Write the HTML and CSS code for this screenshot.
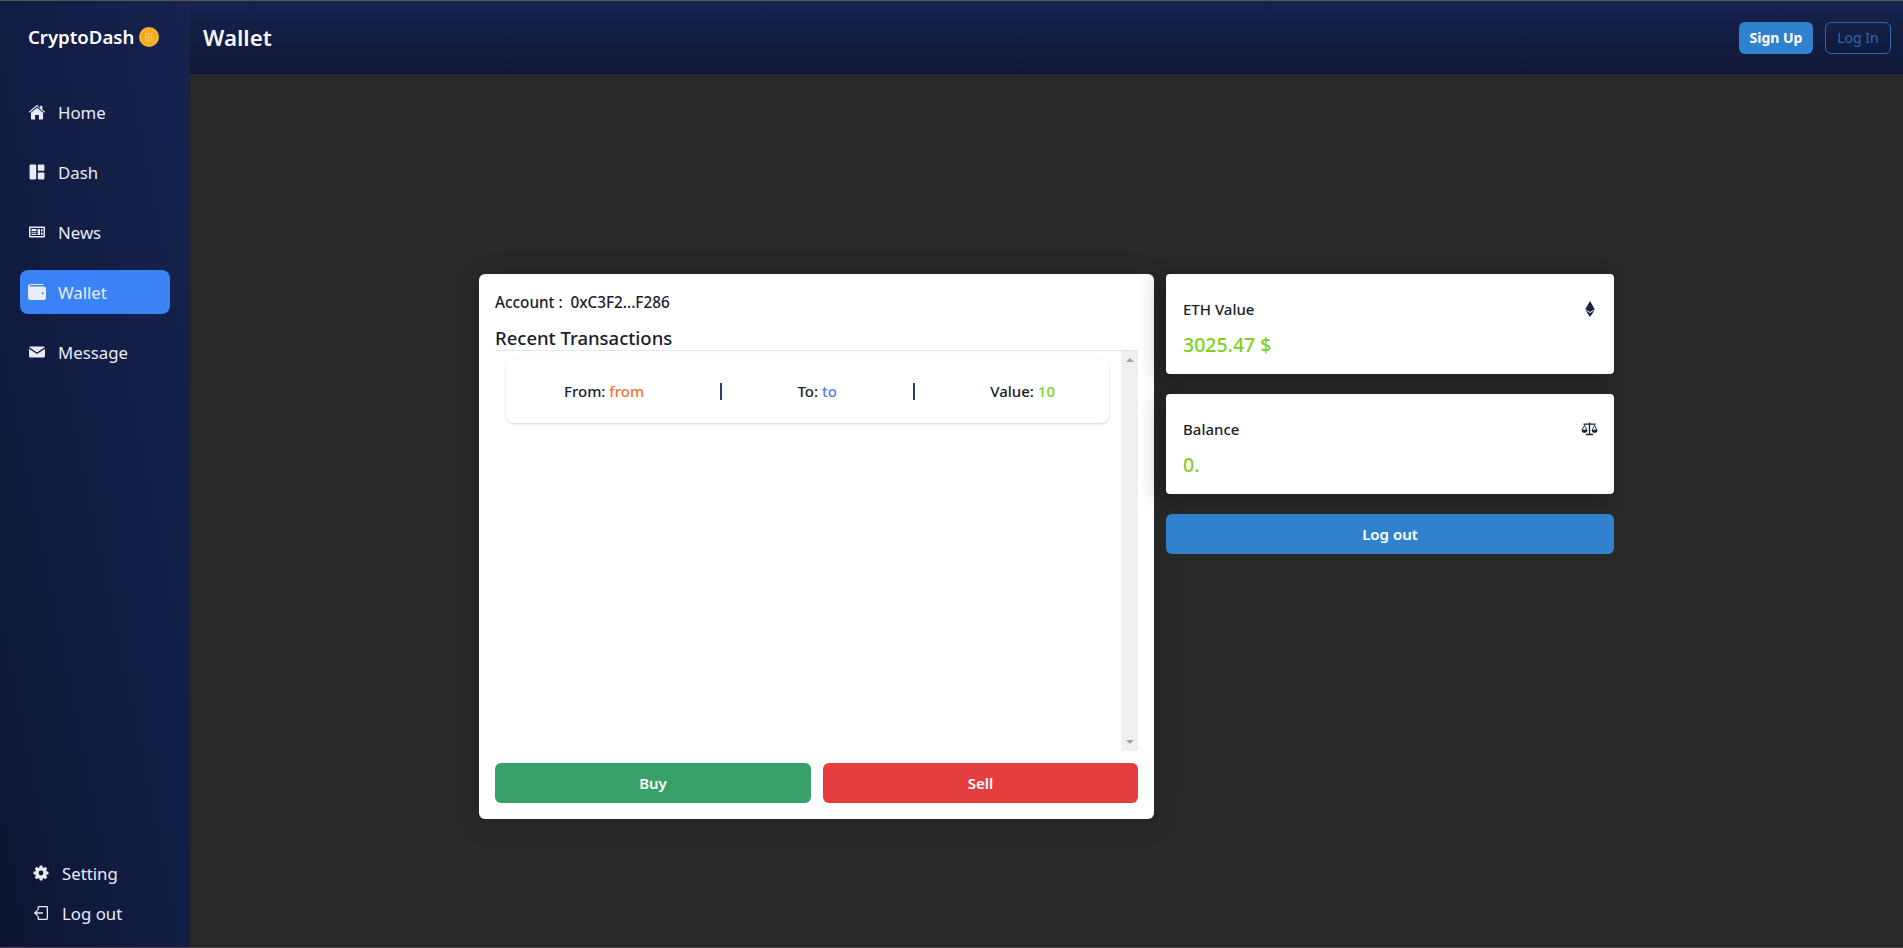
FILE: index.html
```html
<!DOCTYPE html>
<html lang="en">
<head>
  <meta charset="UTF-8" />
  <meta name="viewport" content="width=device-width, initial-scale=1.0" />
  <title>Wallet</title>
  <link rel="stylesheet" href="styles.css">
</head>
<body>
  <aside id="sidebar">
    <div class="brand">
      <span>CryptoDash</span>
      <svg class="coin" viewBox="0 0 20 20"><circle cx="10" cy="10" r="10" fill="#f6b52c"/><circle cx="10" cy="10" r="7.6" fill="#efa91f"/><path d="M6 6h8v1.2H6zM6.6 8h1.4v5H6.6zM9.3 8h1.4v5H9.3zM12 8h1.4v5H12zM6 13.4h8v1H6z" fill="#f8c655"/></svg>
    </div>
    <nav class="nav">
      <a class="nav-item" href="#">
        <svg class="icon" viewBox="0.5 0.5 15 15"><path d="M8 1.2.4 7.8l.7.8L8 2.7l6.9 5.9.7-.8-2.6-2.2V2.2h-2v2.3z"/><path d="M8 3.900 2.300 8.800v5.500c0 .4.3.7.7.7h3.200v-4.200h3.600V15H13c.4 0 .7-.3.7-.7V8.800z"/></svg>
        <span>Home</span>
      </a>
      <a class="nav-item" href="#">
        <svg class="icon" viewBox="1 1 14 14"><path d="M2.500 1.500h3.800c.6 0 1 .4 1 1v11c0 .6-.4 1-1 1H2.500c-.6 0-1-.4-1-1v-11c0-.6.4-1 1-1zM9.700 1.500h3.800c.6 0 1 .4 1 1V6c0 .6-.4 1-1 1H9.700c-.6 0-1-.4-1-1V2.500c0-.6.4-1 1-1zM9.700 8.500h3.800c.6 0 1 .4 1 1v4c0 .6-.4 1-1 1H9.700c-.6 0-1-.4-1-1v-4c0-.6.4-1 1-1z"/></svg>
        <span>Dash</span>
      </a>
      <a class="nav-item" href="#">
        <svg class="icon" viewBox="0 0 16 16"><path fill-rule="evenodd" d="M1.200 2.500h13.600c.7 0 1.200.5 1.200 1.200v8.600c0 .7-.5 1.200-1.200 1.200H1.200C.5 13.500 0 13 0 12.300V3.700c0-.7.500-1.200 1.200-1.200zM1.500 4v8h13V4zM2.500 5h5v2.300h-5zM2.500 8.300h5v.9h-5zM2.500 10h5v1h-5zM8.600 5h2.400v6H8.600zM12 5h1.600v2.500H12zM12 8.500h1.600V11H12z"/></svg>
        <span>News</span>
      </a>
      <a class="nav-item active" href="#">
        <svg class="icon" viewBox="0 0 18 16"><path fill-rule="evenodd" d="M2.500 0h12c.8 0 1.300.4 1.300 1H2.500C2 1 1.700 1.400 1.700 1.800s.3.700.8.700h13.300c1.200 0 2.200.8 2.200 2v9.200c0 1.300-1 2.300-2.200 2.300H2.500C1.100 16 0 14.900 0 13.500v-11C0 1.100 1.100 0 2.500 0zM14.700 8.300a1 1 0 1 0 0 2 1 1 0 0 0 0-2z"/></svg>
        <span>Wallet</span>
      </a>
      <a class="nav-item" href="#">
        <svg class="icon" viewBox="0 0 16 16"><path d="M1.500 2.500h13c.6 0 1.100.3 1.300.8L8 8.400.2 3.300c.2-.5.700-.8 1.300-.8z"/><path d="M0 4.800v7.200c0 .8.700 1.500 1.500 1.500h13c.8 0 1.500-.7 1.500-1.500V4.800L8 10z"/></svg>
        <span>Message</span>
      </a>
    </nav>
    <div class="side-bottom">
      <a class="side-link" href="#">
        <svg class="icon" viewBox="0 0 16 16"><path fill-rule="evenodd" d="M6.700.5h2.600l.4 2 .9.400 1.700-1.100 1.900 1.900-1.100 1.700.4.900 2 .4v2.600l-2 .4-.4.900 1.100 1.700-1.900 1.900-1.700-1.100-.9.400-.4 2H6.700l-.4-2-.9-.4-1.700 1.100-1.900-1.900 1.100-1.700-.4-.9-2-.4V6.700l2-.4.4-.9-1.100-1.700 1.900-1.900 1.700 1.100.9-.4zM8 5.600a2.400 2.400 0 1 0 0 4.800 2.400 2.400 0 0 0 0-4.800z"/></svg>
        <span>Setting</span>
      </a>
      <a class="side-link" href="#">
        <svg class="icon" viewBox="0 0 16 16"><path d="M6 1h7.500c.8 0 1.500.7 1.500 1.500v11c0 .8-.7 1.500-1.500 1.500H6c-.8 0-1.500-.7-1.500-1.500V11h1.300v2.500c0 .1.100.2.200.2h7.500c.1 0 .2-.1.200-.2v-11c0-.1-.1-.2-.2-.2H6c-.1 0-.2.100-.2.200V5H4.500V2.500C4.500 1.700 5.200 1 6 1z"/><path d="M4.200 4.800 5.100 5.700 3.400 7.350H10v1.300H3.400l1.700 1.650-.9.900L.9 8z"/></svg>
        <span>Log out</span>
      </a>
    </div>
  </aside>

  <div id="page">
    <header id="topbar">
      <h1>Wallet</h1>
      <div class="auth">
        <button class="btn-signup">Sign Up</button>
        <button class="btn-login">Log In</button>
      </div>
    </header>

    <main id="content">
      <section class="wallet-card">
        <p class="account">Account :&nbsp; 0xC3F2...F286</p>
        <h2>Recent Transactions</h2>
        <div class="tx-scroll">
          <div class="tx-list">
            <div class="tx-row">
              <div class="tx-cell">From: <span class="from">from</span></div>
              <div class="tx-sep"></div>
              <div class="tx-cell">To: <span class="to">to</span></div>
              <div class="tx-sep"></div>
              <div class="tx-cell">Value: <span class="val">10</span></div>
            </div>
          </div>
          <div class="scrollbar">
            <span class="arrow up"></span>
            <span class="arrow down"></span>
          </div>
        </div>
        <div class="trade">
          <button class="btn-buy">Buy</button>
          <button class="btn-sell">Sell</button>
        </div>
      </section>

      <section class="side-col">
        <div class="stat">
          <div class="stat-head">
            <span>ETH Value</span>
            <svg class="stat-icon" viewBox="0 0 320 512"><path d="M311.900 260.800 160 353.600 8 260.800 160 0zM160 383.400 8 290.600 160 512l152-221.400z"/></svg>
          </div>
          <div class="stat-value">3025.47 $</div>
        </div>
        <div class="stat">
          <div class="stat-head">
            <span>Balance</span>
            <svg class="stat-icon scale" viewBox="0 0 18 14"><path fill-rule="evenodd" d="M8.300 0h1.400v1.200h5.800v1.200h-.9l2.900 5.800c0 1.700-1.500 2.800-3.100 2.800s-3.100-1.100-3.100-2.800l2.900-5.800H9.700v9.500h3.100V13.500H5.200v-1.600h3.100V2.400H3.900l2.900 5.800c0 1.700-1.500 2.800-3.100 2.800S.6 9.900.6 8.200L3.500 2.400h-.9V1.200h5.700zM3.700 3.800 1.900 7.800h3.600zM14.300 3.800l-1.800 4h3.600z"/></svg>
          </div>
          <div class="stat-value">0.</div>
        </div>
        <button class="btn-logout">Log out</button>
      </section>
    </main>
  </div>
</body>
</html>
```

FILE: styles.css
```css
:root {
  --blue: #3182ce;
  --ink: #1a202c;
  --green: #80cf1c;
}
* { box-sizing: border-box; }
body {
  margin: 0;
  height: 100vh;
  display: flex;
  overflow: hidden;
  font-family: "Noto Sans", "Open Sans", sans-serif;
  background: #282828;
  color: var(--ink);
  border-top: 1px solid #555;
  border-bottom: 1px solid #444;
}
button { font-family: inherit; border: none; cursor: pointer; }

/* sidebar */
#sidebar {
  width: 190px;
  flex-shrink: 0;
  display: flex;
  flex-direction: column;
  padding: 0 20px;
  background: linear-gradient(to top right, #0c1430, #101b40 35%, #15234f);
  color: #e8ecf6;
}
.brand {
  height: 71px;
  display: flex;
  align-items: center;
  gap: 5px;
  padding-left: 8px;
  font-size: 18.600px;
  font-weight: 600;
  color: #fff;
  white-space: nowrap;
}
.coin { width: 20px; height: 20px; flex-shrink: 0; }
.nav { display: flex; flex-direction: column; gap: 16px; margin-top: 18px; }
.nav-item {
  height: 44px;
  display: flex;
  align-items: center;
  gap: 12px;
  padding-left: 8px;
  border-radius: 8px;
  color: inherit;
  text-decoration: none;
  font-size: 16.800px;
}
.nav-item.active { background: #3b82f6; }
.icon { width: 18px; height: 16px; fill: #e8ecf6; flex-shrink: 0; }
.side-bottom { margin-top: auto; padding: 0 0 19px 12px; display: flex; flex-direction: column; gap: 10px; }
.side-link {
  height: 30px;
  display: flex;
  align-items: center;
  gap: 12px;
  color: inherit;
  text-decoration: none;
  font-size: 16.800px;
}

/* top bar */
#page { flex: 1; min-width: 0; display: flex; flex-direction: column; }
#topbar {
  height: 73px;
  flex-shrink: 0;
  display: flex;
  align-items: center;
  justify-content: space-between;
  padding: 0 12px 0 13px;
  background: linear-gradient(to bottom, #15234f, #0f1735);
}
#topbar h1 { margin: 0; font-size: 22.400px; font-weight: 600; color: #f5f7fb; }
.auth { display: flex; gap: 12px; }
.auth button { height: 32px; border-radius: 6px; font-size: 14px; }
.btn-signup { width: 74px; background: var(--blue); color: #fff; font-weight: 700; }
.btn-login { width: 66px; background: transparent; border: 1px solid #2b6cb0; color: #2b6cb0; }

/* content */
#content {
  flex: 1;
  display: flex;
  justify-content: center;
  align-items: flex-start;
  gap: 12px;
  padding-top: 200px;
}
.wallet-card {
  width: 675px;
  height: 545px;
  display: flex;
  flex-direction: column;
  padding: 17px 16px 16px;
  background: #fff;
  border-radius: 6px;
  box-shadow: 0 4px 30px rgba(0, 0, 0, 0.1);
}
.account { margin: 0 0 12px; font-size: 15.300px; line-height: 23px; font-weight: 500; }
.wallet-card h2 {
  margin: 0;
  font-size: 18.500px;
  font-weight: 500;
  line-height: 24px;
  border-bottom: 1px solid #e2e8f0;
}
.tx-scroll { flex: 1; min-height: 0; display: flex; }
.tx-list { flex: 1; padding: 8px 12px 0 11px; }
.tx-row {
  height: 64px;
  display: flex;
  align-items: center;
  justify-content: space-between;
  padding: 0 54px 0 58px;
  border-radius: 8px;
  box-shadow: 0 1px 3px rgba(0, 0, 0, 0.12), 0 1px 2px rgba(0, 0, 0, 0.06);
  font-size: 15px;
  font-weight: 500;
}
.tx-cell { white-space: nowrap; }
.tx-sep { width: 2px; height: 17px; background: #2a3a6a; }
.from { color: #f6732b; }
.to { color: #4f7ff0; }
.val { color: var(--green); }
.scrollbar {
  width: 17px;
  background: #f0f0f0;
  display: flex;
  flex-direction: column;
  justify-content: space-between;
  align-items: center;
  padding: 7px 0;
}
.arrow { width: 0; height: 0; border-left: 4px solid transparent; border-right: 4px solid transparent; }
.arrow.up { border-bottom: 4px solid #a3a3a3; }
.arrow.down { border-top: 4px solid #a3a3a3; }
.trade { display: flex; gap: 12px; margin-top: 12px; }
.trade button { height: 40px; border-radius: 6px; color: #fff; font-size: 15px; font-weight: 600; }
.btn-buy { flex: 0 0 316px; background: #38a169; }
.btn-sell { flex: 1; background: #e53e3e; }

/* right column */
.side-col { width: 448px; display: flex; flex-direction: column; gap: 20px; }
.stat {
  height: 100px;
  padding: 24px 16px 0 17px;
  background: #fff;
  border-radius: 4px;
  box-shadow: -8px 4px 20px rgba(0, 0, 0, 0.25);
}
.stat-head {
  display: flex;
  align-items: center;
  justify-content: space-between;
  height: 22px;
  font-size: 15px;
  font-weight: 500;
}
.stat-icon { width: 16px; height: 16px; fill: #1a2340; }
.stat-icon.scale { width: 17px; }
.stat-value { margin-top: 11px; font-size: 19.500px; line-height: 28px; font-weight: 500; color: var(--green); }
.btn-logout {
  height: 40px;
  border-radius: 6px;
  background: var(--blue);
  color: #fff;
  font-size: 15px;
  font-weight: 600;
}
```
